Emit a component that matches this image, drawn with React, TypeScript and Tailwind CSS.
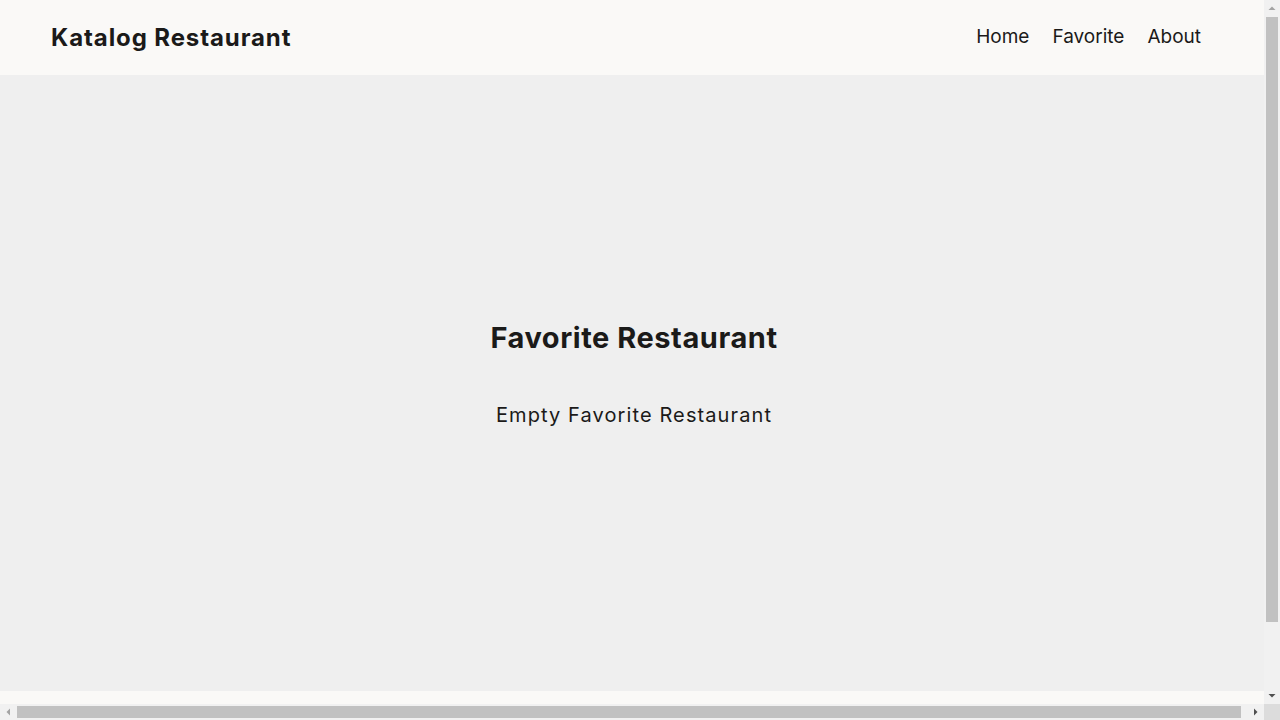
function Arrow({ dir, dark }: { dir: 'up' | 'down' | 'left' | 'right'; dark?: boolean }) {
    const points = {
        up: '4.5,10 8,6.5 11.5,10',
        down: '4.5,6 8,9.5 11.5,6',
        left: '10,4.5 6.5,8 10,11.5',
        right: '6,4.5 9.5,8 6,11.5',
    }[dir];
    return (
        <div className="w-4 h-4 shrink-0 flex items-center justify-center">
            <svg width="16" height="16" viewBox="0 0 16 16">
                <polygon points={points} fill={dark ? '#505050' : '#a3a3a3'} />
            </svg>
        </div>
    );
}

export default function App() {
    return (
        <div className="w-[1280px] h-[720px] flex flex-col overflow-hidden">
            <div className="flex flex-1 min-h-0">
                {/* Page viewport */}
                <div className="w-[1264px] h-[704px] overflow-hidden">
                    <div className="min-h-[780px] flex flex-col bg-[#efefef] text-[#1b1a19] font-['Inter','Noto_Sans',sans-serif]">
                        {/* Header */}
                        <header className="h-[75px] shrink-0 bg-[#faf9f7] flex items-center justify-between pl-[51px] pr-[63px]">
                            <h1 className="text-[24px] font-bold tracking-[0.9px]">Katalog Restaurant</h1>
                            <nav className="flex items-center gap-[23px] text-[19px]">
                                <a href="#">Home</a>
                                <a href="#">Favorite</a>
                                <a href="#">About</a>
                            </nav>
                        </header>

                        {/* Content */}
                        <main className="h-[616px] shrink-0 flex flex-col items-center justify-center pl-[4px] pb-[20px]">
                            <h2 className="text-[29px] font-bold tracking-[0.55px]">Favorite Restaurant</h2>
                            <p className="mt-[41px] text-[20px] tracking-[1.1px]">Empty Favorite Restaurant</p>
                        </main>

                        {/* Footer */}
                        <footer className="h-[89px] shrink-0 bg-[#faf9f7]"></footer>
                    </div>
                </div>

                {/* Vertical scrollbar */}
                <div className="w-4 h-[704px] bg-[#f1f1f1] flex flex-col">
                    <Arrow dir="up" />
                    <div className="flex-1 px-[2px]">
                        <div className="h-[605px] mt-[1px] bg-[#c1c1c1]"></div>
                    </div>
                    <Arrow dir="down" dark />
                </div>
            </div>

            {/* Horizontal scrollbar */}
            <div className="h-4 flex">
                <div className="w-[1264px] bg-[#f1f1f1] flex">
                    <Arrow dir="left" />
                    <div className="flex-1 py-[2px]">
                        <div className="w-[1224px] ml-[1px] h-full bg-[#c1c1c1]"></div>
                    </div>
                    <Arrow dir="right" dark />
                </div>
                <div className="w-4 bg-[#dcdcdc]"></div>
            </div>
        </div>
    );
}
